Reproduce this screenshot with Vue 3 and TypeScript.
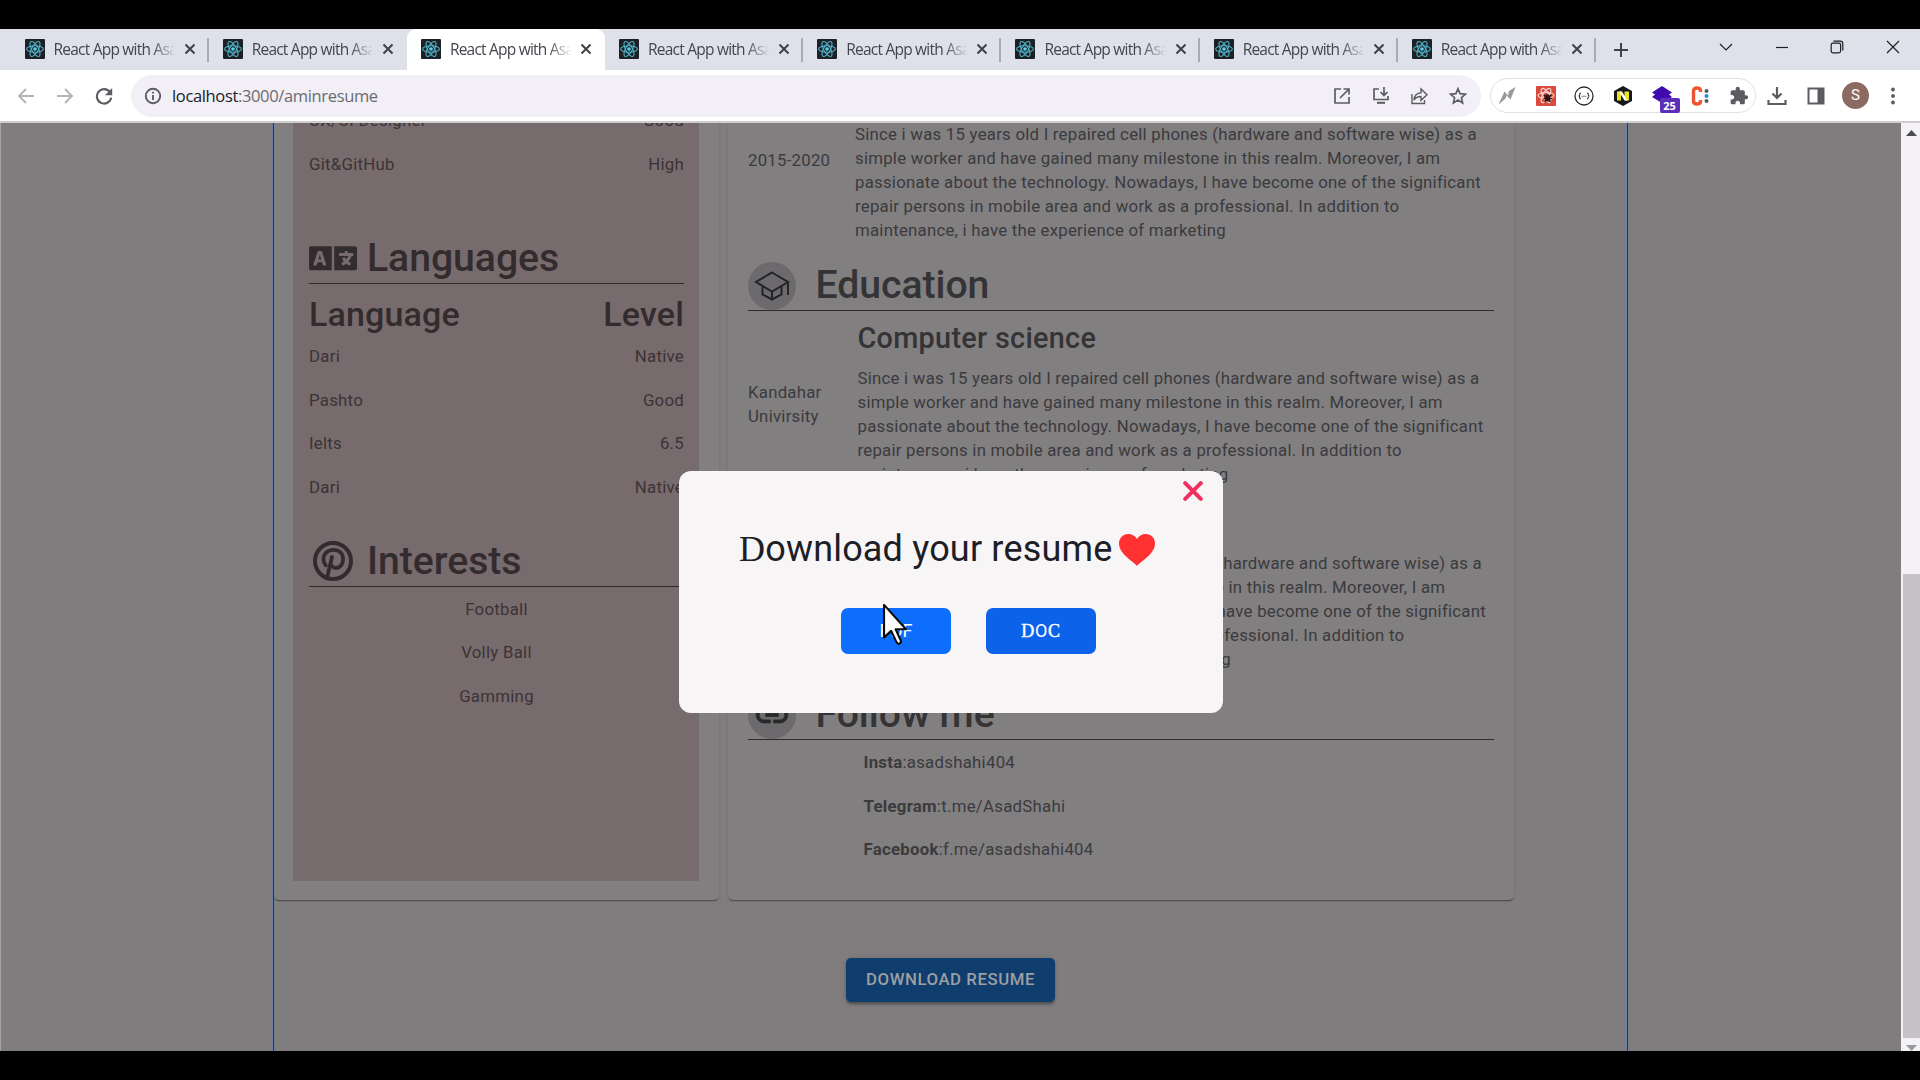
<script setup lang="ts">
interface Pair { name: string; level: string }

const tabs = Array.from({ length: 8 }, (_, i) => ({ id: i, title: 'React App with Asad', active: i === 2 }))

const skills: Pair[] = [
  { name: 'UX/UI Designer', level: 'Good' },
  { name: 'Git&GitHub', level: 'High' },
]
const languages: Pair[] = [
  { name: 'Dari', level: 'Native' },
  { name: 'Pashto', level: 'Good' },
  { name: 'Ielts', level: '6.5' },
  { name: 'Dari', level: 'Native' },
]
const interests: string[] = ['Football', 'Volly Ball', 'Gamming']
const about: string[] = [
  'Since i was 15 years old I repaired cell phones (hardware and software wise) as a',
  'simple worker and have gained many milestone in this realm. Moreover, I am',
  'passionate about the technology. Nowadays, I have become one of the significant',
  'repair persons in mobile area and work as a professional. In addition to',
  'maintenance, i have the experience of marketing',
]
const links: Pair[] = [
  { name: 'Insta', level: 'asadshahi404' },
  { name: 'Telegram', level: 't.me/AsadShahi' },
  { name: 'Facebook', level: 'f.me/asadshahi404' },
]
</script>

<template>
  <div class="screen">
    <header class="tabstrip">
      <div v-for="t in tabs" :key="t.id" class="tab" :class="{ active: t.active, noline: t.id === 1 }">
        <svg class="favicon" viewBox="0 0 20 20">
          <rect width="20" height="20" rx="1" fill="#1d2125" />
          <g fill="none" stroke="#4fb3cb" stroke-width="1.1">
            <ellipse cx="10" cy="10" rx="8.4" ry="3.3" />
            <ellipse cx="10" cy="10" rx="8.4" ry="3.3" transform="rotate(60 10 10)" />
            <ellipse cx="10" cy="10" rx="8.4" ry="3.3" transform="rotate(120 10 10)" />
          </g>
          <circle cx="10" cy="10" r="1.8" fill="#5fd3ee" />
        </svg>
        <span class="title">{{ t.title }}</span>
        <svg class="tabx" viewBox="0 0 12 12"><path d="M1.5 1.5l9 9M10.5 1.5l-9 9" stroke="#3f4147" stroke-width="2" /></svg>
      </div>
      <svg class="plus" viewBox="0 0 16 16"><path d="M8 1v14M1 8h14" stroke="#3f4147" stroke-width="2" /></svg>
      <div class="winctl">
        <svg viewBox="0 0 14 14"><path d="M1 4l6 6 6-6" /></svg>
        <svg viewBox="0 0 14 14"><path d="M1 7.5h12" /></svg>
        <svg viewBox="0 0 14 14"><rect x="1.2" y="3.2" width="9.4" height="9.6" rx="1.8" /><path d="M3.4 1.2h6.8q2.6 0 2.6 2.6v6.6" /></svg>
        <svg viewBox="0 0 14 14"><path d="M1 1l12 12M13 1L1 13" /></svg>
      </div>
    </header>

    <div class="toolbar">
      <div class="nav">
        <svg viewBox="0 0 18 18" class="dim"><path d="M17 9H2M9 2L2 9l7 7" /></svg>
        <svg viewBox="0 0 18 18" class="dim"><path d="M1 9h15M9 2l7 7-7 7" /></svg>
        <svg viewBox="0 0 18 18"><path d="M15 5.2A7.2 7.2 0 1 0 16.2 10.6" stroke-width="2.1" /><path d="M17.2 1v7.2H10z" fill="#5c5c61" stroke="none" /></svg>
      </div>
      <div class="omnibox">
        <svg class="info" viewBox="0 0 18 18"><circle cx="9" cy="9" r="7.2" /><path d="M9 8v5M9 4.8v1.8" /></svg>
        <span class="url"><b>localhost</b>:3000/aminresume</span>
        <div class="omni-icons">
          <svg viewBox="0 0 18 18"><path d="M8 2H2v14h14v-6M10.500 2H16v5.500M16 2L7 11" /></svg>
          <svg viewBox="0 0 18 18"><path d="M7 2H2v10.500h14V9M12 0v8M8.500 5L12 8.500 15.500 5" /><path d="M5 15.800h8" stroke-width="2" /></svg>
          <svg viewBox="0 0 18 18"><path d="M2 7v9.500h12.500V13M4 13c.5-5 3.500-7 7-7.200V2l6 5.800-6 5.500V9.500c-3 0-5.200.8-7 3.500z" stroke-width="1.400" /></svg>
          <svg viewBox="0 0 18 18"><path d="M9 1.800l2.100 4.900 5.300.5-4 3.500 1.200 5.200L9 13.100l-4.600 2.800 1.200-5.200-4-3.500 5.300-.5z" /></svg>
        </div>
      </div>
      <div class="exts">
        <svg viewBox="0 0 20 20"><path d="M18.500 1L12 5l-1 4.500L7.500 5.500 1.500 18.500l7-6 1-3 4 4z" fill="#99999c" /></svg>
        <svg viewBox="0 0 20 20">
          <rect width="20" height="20" rx="1" fill="#d9493c" />
          <g fill="none" stroke="#f6d5d0" stroke-width="1.200">
            <ellipse cx="10" cy="9.500" rx="8" ry="3.200" />
            <ellipse cx="10" cy="9.500" rx="8" ry="3.200" transform="rotate(60 10 9.500)" />
            <ellipse cx="10" cy="9.500" rx="8" ry="3.200" transform="rotate(120 10 9.500)" />
          </g>
          <ellipse cx="11.500" cy="12" rx="3" ry="3.500" fill="#2e1513" />
          <path d="M8 9l7 7M15.500 8.500l-7 7.500M7.500 12.500h8.500" stroke="#2e1513" stroke-width="1.100" />
        </svg>
        <svg viewBox="0 0 20 20"><circle cx="10" cy="10" r="9" fill="#fff" stroke="#2c2c2e" stroke-width="1.300" /><path d="M7 7q-1.300 0-1.300 1.500T4.500 10q1.200 0 1.200 1.500T7 13M13 7q1.300 0 1.300 1.500T15.500 10q-1.200 0-1.200 1.500T13 13" fill="none" stroke="#2c2c2e" stroke-width="1.100" /><path d="M7.700 10.300h1M9.500 10.300h1M11.300 10.300h1" stroke="#2c2c2e" stroke-width="1.100" /></svg>
        <svg viewBox="0 0 20 20"><path d="M10 0l9 5v10l-9 5-9-5V5z" fill="#14171b" /><path d="M4 5.500h4l3.500 5v-5H16v9h-3.500L8 8.500v6H4z" fill="#e9e21c" /><path d="M6 5.500h3l5.500 9h-3z" fill="#fff" /></svg>
        <span class="boxed">
          <svg viewBox="0 0 20 20"><path d="M10 0l10 6.500-3 2 3 2.500-10 6-10-6 3-2.500-3-2z" fill="#4109b0" /></svg>
          <span class="badge">25</span>
        </span>
        <svg viewBox="0 0 20 20"><path d="M10.500 6V4.500Q10.500 2 7 2t-3.500 3v10Q3.500 18 7 18t3.500-2.500V14" fill="none" stroke="#ee5430" stroke-width="3.400" /><circle cx="16.500" cy="5" r="2" fill="#555a63" /><circle cx="16.500" cy="10" r="2" fill="#2b83dc" /><circle cx="16.500" cy="15" r="2" fill="#555a63" /></svg>
        <svg viewBox="0 0 24 24"><path fill="#5c5c61" d="M20.500 11H19V7c0-1.100-.9-2-2-2h-4V3.500a2.500 2.500 0 0 0-5 0V5H4c-1.100 0-2 .9-2 2v3.800h1.500c1.500 0 2.700 1.200 2.700 2.700S5 16.200 3.500 16.200H2V20c0 1.100.9 2 2 2h3.800v-1.500c0-1.500 1.200-2.700 2.700-2.700s2.700 1.200 2.700 2.700V22H17c1.100 0 2-.9 2-2v-4h1.500a2.500 2.500 0 0 0 0-5z" /></svg>
      </div>
      <div class="right-icons">
        <svg viewBox="0 0 20 20"><path d="M10 1v10.500M5.500 7.500L10 12l4.500-4.500M1.500 14v4h17v-4" fill="none" stroke="#5c5c61" stroke-width="2.200" /></svg>
        <svg class="panel" viewBox="0 0 20 20"><rect x="2.500" y="2.500" width="15" height="15" fill="none" stroke="#5c5c61" stroke-width="2" /><rect x="11.500" y="2" width="6" height="16" fill="#5c5c61" /></svg>
        <span class="avatar">S</span>
        <svg viewBox="0 0 20 20" fill="#5c5c61"><circle cx="10" cy="3.500" r="1.900" /><circle cx="10" cy="10" r="1.900" /><circle cx="10" cy="16.500" r="1.900" /></svg>
      </div>
    </div>

    <main class="viewport">
      <div class="page">
        <div class="container">
          <div class="cards">
            <section class="card left">
              <div class="pink">
                <div v-for="s in skills" :key="s.name" class="row"><span>{{ s.name }}</span><span>{{ s.level }}</span></div>
                <div class="head lang">
                  <svg width="48" height="38.400" viewBox="0 0 640 512" fill="#332c2e"><path d="M152.100 236.200c-3.500-12.100-7.800-33.200-7.800-33.200h-.5s-4.300 21.100-7.800 33.200l-11.100 37.500H163zM616 96H336v320h280c13.300 0 24-10.700 24-24V120c0-13.300-10.700-24-24-24zm-24 120c0 6.600-5.400 12-12 12h-11.400c-6.900 23.600-21.700 47.400-42.700 69.900 8.400 6.400 17.100 12.500 26.100 18 5.500 3.400 7.300 10.500 4.100 16.200l-7.900 13.900c-3.400 5.900-10.900 7.800-16.700 4.300-12.600-7.800-24.500-16.100-35.400-24.900-10.900 8.700-22.700 17.100-35.400 24.900-5.800 3.500-13.300 1.600-16.700-4.300l-7.900-13.900c-3.200-5.600-1.400-12.800 4.200-16.200 9.300-5.700 18-11.700 26.100-18-7.900-8.400-14.900-17-21-25.700-4-5.700-2.200-13.600 3.700-17.100l6.500-3.900 7.300-4.300c5.400-3.200 12.400-1.700 16 3.400 5 7 10.800 14 17.400 20.900 13.500-14.200 23.800-28.900 30-43.200H412c-6.600 0-12-5.400-12-12v-16c0-6.600 5.400-12 12-12h64v-16c0-6.600 5.400-12 12-12h16c6.600 0 12 5.400 12 12v16h64c6.600 0 12 5.400 12 12zM0 120v272c0 13.300 10.700 24 24 24h280V96H24c-13.300 0-24 10.700-24 24zm58.900 216.100L116.400 167c1.700-4.900 6.200-8.100 11.400-8.100h32.500c5.100 0 9.700 3.300 11.400 8.100l57.500 169.100c2.600 7.800-3.100 15.900-11.400 15.900h-22.900a12 12 0 0 1-11.500-8.600l-9.400-31.900h-60.200l-9.100 31.800c-1.500 5.100-6.200 8.700-11.500 8.700H70.300c-8.200 0-14-8.100-11.400-15.900z" /></svg>
                  <h2>Languages</h2>
                </div>
                <div class="colhead"><span>Language</span><span>Level</span></div>
                <div v-for="(l, i) in languages" :key="i" class="row"><span>{{ l.name }}</span><span>{{ l.level }}</span></div>
                <div class="head inter">
                  <svg width="48" height="48" viewBox="0 0 48 48" fill="none" stroke="#332c2e"><circle cx="24" cy="24" r="18" stroke-width="4" /><path d="M16.800 28.300c-3-3.500-3.300-8.600-.3-12 3.700-4.200 11-4.600 14.800-1.200 4.400 4 3.200 12.700-1.500 15.100-3 1.500-6.500.2-7.300-1.800M23 20l-5 21" stroke-width="3.800" stroke-linecap="round" /></svg>
                  <h2>Interests</h2>
                </div>
                <div v-for="t in interests" :key="t" class="row center"><span>{{ t }}</span></div>
              </div>
            </section>

            <section class="card right">
              <div class="entry first">
                <div class="when">2015-2020</div>
                <div class="what"><p v-for="l in about" :key="l">{{ l }}</p></div>
              </div>
              <div class="head edu">
                <span class="disc"><svg width="36" height="32" viewBox="0 0 36 32" fill="none" stroke="#242325" stroke-width="2"><path d="M18 2.500L34 12 18 21.500 2 12zM8.500 16v8.500L18 29.500l9.500-5V16M18 21.500v8M34 12v13" /></svg></span>
                <h2>Education</h2>
              </div>
              <div class="entry second">
                <div class="when">Kandahar<br>Univirsity</div>
                <div class="what">
                  <h3>Computer science</h3>
                  <p v-for="l in about" :key="l">{{ l }}</p>
                </div>
              </div>
              <div class="entry third">
                <div class="when"></div>
                <div class="what"><p v-for="l in about" :key="l">{{ l }}</p></div>
              </div>
              <div class="head follow">
                <span class="disc"><svg width="38" height="38" viewBox="0 0 24 24" fill="#29282a"><path d="M3.900 12c0-1.710 1.390-3.100 3.100-3.100h4V7H7c-2.760 0-5 2.240-5 5s2.240 5 5 5h4v-1.900H7c-1.710 0-3.100-1.390-3.100-3.100M8 13h8v-2H8zm9-6h-4v1.900h4c1.710 0 3.100 1.390 3.100 3.100s-1.390 3.100-3.100 3.100h-4V17h4c2.760 0 5-2.240 5-5s-2.240-5-5-5" stroke="#29282a" stroke-width=".5" /></svg></span>
                <h2>Follow me</h2>
              </div>
              <div class="links">
                <div v-for="l in links" :key="l.name" class="row link"><span><b>{{ l.name }}</b>:{{ l.level }}</span></div>
              </div>
            </section>
          </div>
          <button class="download">DOWNLOAD RESUME</button>
        </div>
      </div>
      <div class="scrollbar">
        <svg width="11" height="6" viewBox="0 0 11 6"><path d="M0 6l5.500-6L11 6z" fill="#4c4c4e" /></svg>
        <div class="thumb"></div>
        <svg class="down" width="11" height="6" viewBox="0 0 11 6"><path d="M0 0l5.500 6L11 0z" fill="#9a9a9c" /></svg>
      </div>

      <div class="modal">
        <svg class="close" width="20" height="20" viewBox="0 0 20 20"><path d="M2.200 2.200l15.600 15.600M17.800 2.200L2.200 17.800" stroke="#f2305f" stroke-width="4" stroke-linecap="round" /></svg>
        <div class="mhead">
          <span class="mtitle"><span class="serif">D</span>ownload your resume</span>
          <svg width="36" height="32" viewBox="0 0 36 32"><path d="M18 32C14 27 0 20 0 9.500 0 4 4 0 9.300 0 13 0 16.500 2 18 5c1.500-3 5-5 8.700-5C32 0 36 4 36 9.500 36 20 22 27 18 32z" fill="#ff3131" /></svg>
        </div>
        <div class="mbtns">
          <button>PDF</button>
          <button class="doc"><span class="serif">D</span>O<span class="serif">C</span></button>
        </div>
      </div>

      <svg class="cursor" width="27" height="42" viewBox="0 0 28 44"><path d="M2 2v34l7.500-6.800 5.800 12.300q1 1.800 3 1t1.300-3L14.200 27.500H25z" fill="#fff" stroke="#0d0d0d" stroke-width="2.200" stroke-linejoin="round" /></svg>
    </main>
  </div>
</template>

<style>
body { margin: 0; background: #000; overflow: hidden; }
</style>

<style scoped>
* { box-sizing: border-box; }
h2, h3, p { margin: 0; }
svg { flex: none; display: block; }
.screen { width: 1920px; height: 1080px; padding-top: 29px; background: #000; overflow: hidden; font-family: Roboto, sans-serif; }

.tabstrip { height: 41px; display: flex; align-items: center; background: #dee1ea; padding-left: 10.500px; }
.tab { width: 198.200px; height: 41px; flex: none; display: flex; align-items: center; padding: 0 13px 1px 14px; position: relative; }
.tab::after { content: ''; position: absolute; right: 0; top: 9px; width: 2px; height: 24px; background: #a9abb3; }
.tab.active { background: #fff; border-radius: 9px 9px 0 0; }
.tab.active::after, .tab.noline::after { display: none; }
.favicon { width: 20px; height: 20px; }
.title { width: 122px; margin-left: 9px; font: 15.500px/22px "Open Sans", sans-serif; letter-spacing: -0.780px; color: #45464d; white-space: nowrap; overflow: hidden; -webkit-mask-image: linear-gradient(90deg, #000 98px, transparent 122px); mask-image: linear-gradient(90deg, #000 98px, transparent 122px); }
.tabx { width: 12px; height: 12px; margin-left: 9.500px; }
.plus { width: 16px; height: 16px; margin-left: 17px; }
.winctl { margin-left: 90px; margin-bottom: 6px; display: flex; gap: 41.600px; }
.winctl svg { width: 14px; height: 14px; fill: none; stroke: #1f1f22; stroke-width: 1.200; }

.toolbar { height: 53px; background: #fff; border-bottom: 2px solid #cfcdd0; display: flex; align-items: center; }
.nav { display: flex; gap: 21px; padding-left: 17px; width: 131px; flex: none; }
.nav svg { width: 18px; height: 18px; fill: none; stroke: #5c5c61; stroke-width: 1.900; }
.nav .dim { stroke: #b5b3b7; }
.omnibox { width: 1350px; height: 42px; flex: none; border-radius: 21px; background: #f2f0f6; display: flex; align-items: center; padding: 0 14px 0 13px; }
.info { width: 18px; height: 18px; fill: none; stroke: #5c5c61; stroke-width: 1.900; }
.url { margin-left: 10px; font: 16.500px/24px "Open Sans", sans-serif; letter-spacing: -0.350px; color: #6a6a70; }
.url b { font-weight: 400; color: #202127; }
.omni-icons { margin-left: auto; display: flex; gap: 20.700px; }
.omni-icons svg { width: 18px; height: 18px; fill: none; stroke: #5c5c61; stroke-width: 1.700; }
.exts { width: 266px; height: 35px; flex: none; margin-left: 9px; border: 1px solid #e0dfe3; border-radius: 18px; display: flex; align-items: center; justify-content: space-between; padding: 0 6px; }
.exts > svg, .boxed svg { width: 20px; height: 20px; }
.boxed { position: relative; }
.badge { position: absolute; left: 8px; top: 12px; width: 20px; height: 15px; border-radius: 2px; background: #5b2fb8; color: #fff; font: 700 11px/15px "Open Sans", sans-serif; text-align: center; }
.right-icons { display: flex; align-items: center; margin-left: 11px; }
.right-icons svg { width: 20px; height: 20px; }
.right-icons .panel { margin-left: 19px; }
.avatar { width: 27px; height: 27px; margin: 0 14px 0 16px; border-radius: 50%; background: #8d6a61; color: #fff; font-size: 15px; line-height: 27px; text-align: center; }

.viewport { height: 928px; display: flex; overflow: hidden; position: relative; background: #807e7f; }
.page { width: 1901px; height: 928px; padding-left: 272px; background: #7f7d7e; overflow: hidden; border-left: 1px solid #a5a3a4; }
.container { width: 1355px; height: 928px; border-left: 1px solid #1d3470; border-right: 1px solid #1d3470; box-shadow: -1px 0 #6a80ad, inset -1px 0 #6a80ad; display: flex; flex-direction: column; }
.cards { display: flex; gap: 9px; flex: none; }
.card { height: 777px; background: #817f80; border-radius: 0 0 5px 5px; box-shadow: 0 2px 1px -1px rgba(0, 0, 0, .35), 0 1px 3px rgba(0, 0, 0, .14); overflow: hidden; }
.left { width: 445px; padding-left: 19px; }
.pink { width: 406px; height: 758px; background: #786b6d; padding: 0 15px 0 16px; overflow: hidden; color: #3b3335; }
.row { height: 43.600px; display: flex; justify-content: space-between; font-size: 16.800px; line-height: 43.600px; letter-spacing: .27px; }
.pink > .row:first-child { margin-top: -23.800px; }
.row.center { justify-content: center; }
.head { display: flex; align-items: center; border-bottom: 1px solid #302b2d; }
.head h2 { font-size: 39.200px; font-weight: 500; color: #332c2e; white-space: nowrap; letter-spacing: -.05px; }
.lang { margin-top: 47.600px; height: 50px; }
.lang h2, .inter h2 { margin-left: 10px; line-height: 48px; }
.inter { margin-top: 26.600px; height: 51px; }
.inter svg { margin-top: 1px; }
.inter ~ .row { position: relative; top: .6px; }
.colhead { display: flex; justify-content: space-between; margin-top: 10px; height: 41px; font-size: 34px; font-weight: 500; line-height: 41px; letter-spacing: .15px; color: #332c2e; }

.right { width: 786px; padding: 0 20px; color: #3b3a3d; }
.entry { display: flex; font-size: 16.800px; line-height: 24px; letter-spacing: .24px; white-space: nowrap; }
.when { width: 107px; flex: none; }
.first { margin-top: -1px; }
.first .when { margin-top: 25.500px; }
.second .when { margin-top: 69px; width: 109.500px; }
.third .when { width: 112px; }
.third { margin-top: 65px; }
.edu { margin-top: 20px; height: 49px; }
.disc { width: 48px; height: 48px; border-radius: 50%; background: #6c6a6c; display: flex; align-items: center; justify-content: center; }
.right .head h2 { margin: -3px 0 0 19.500px; line-height: 46px; color: #343335; }
h3 { font-size: 28.800px; font-weight: 500; line-height: 36px; margin: 9px 0 10px; letter-spacing: .3px; color: #343335; }
.follow { margin-top: 20px; height: 49px; flex: none; }
.links { padding-top: 1px; }
.row.link { padding-left: 115.500px; justify-content: flex-start; }
.row.link b { font-weight: 700; }
.download { width: 209px; height: 44px; flex: none; margin: 58px 0 0 572px; border: 0; border-radius: 5px; background: #0e3d6e; color: #9d9fa3; font: 500 16.800px/42px Roboto, sans-serif; letter-spacing: .55px; padding: 0 0 2px; box-shadow: 0 3px 3px -1px rgba(0, 0, 0, .3), 0 1px 5px rgba(0, 0, 0, .2); }

.scrollbar { width: 19px; background: #f4f2f4; display: flex; flex-direction: column; align-items: center; padding: 7px 0 0 1px; }
.thumb { width: 17px; height: 468px; margin-top: 438px; background: #c4c2c5; align-self: flex-end; }
.down { margin-top: 7px; }

.modal { position: absolute; left: 678.500px; top: 348px; width: 544px; height: 242px; border-radius: 12px; background: #f8f5f6; display: flex; flex-direction: column; }
.close { align-self: flex-end; margin: 10px 19.500px 0 0; }
.mhead { display: flex; align-items: center; margin: 25px 0 0 60.500px; height: 46px; }
.mtitle { width: 371px; font-size: 36px; line-height: 46px; white-space: nowrap; letter-spacing: .18px; color: #1c2026; }
.mhead svg { margin-left: 9px; margin-top: 1px; }
.serif { font-family: "Liberation Serif", serif; }
.mbtns { display: flex; gap: 35px; margin: 36px 0 0 162.500px; }
.mbtns button { width: 110px; height: 46px; border: 0; border-radius: 7px; background: #0d6efd; color: #fff; font: 18px/44px Roboto, sans-serif; padding: 0 0 1px; }
.mbtns .doc { background: #0d62ea; letter-spacing: .7px; }
.mbtns .serif { -webkit-text-stroke: .4px #fff; }
.cursor { position: absolute; left: 881.500px; top: 480px; }
</style>
